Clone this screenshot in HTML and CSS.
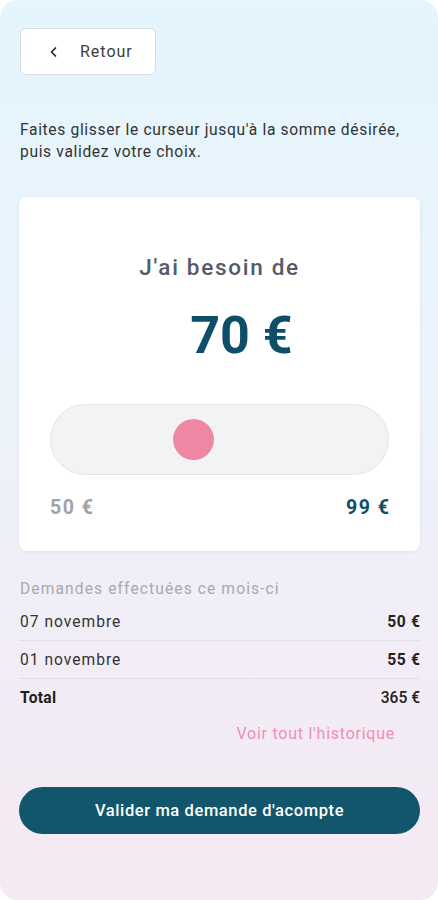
FILE: index.html
```html
<!DOCTYPE html>
<html lang="fr">
<head>
    <meta charset="UTF-8">
    <meta name="viewport" content="width=device-width, initial-scale=1.0">
    <title>Demande d'acompte</title>
    <link rel="stylesheet" href="styles.css">
</head>
<body>
    <div class="screen">
        <button class="back-btn" type="button">
            <svg class="back-icon" width="10" height="12" viewBox="0 0 10 12">
                <path d="M6.5 2 L2.5 6 L6.5 10" fill="none" stroke="#222" stroke-width="1.7" stroke-linecap="round" stroke-linejoin="round"/>
            </svg>
            <span>Retour</span>
        </button>

        <p class="intro">Faites glisser le curseur jusqu'à la somme désirée, puis validez votre choix.</p>

        <div class="card">
            <h2 class="card-title">J'ai besoin de</h2>
            <div class="amount">70 €</div>

            <div class="slider">
                <!-- position du curseur : (70 - 50) / (99 - 50) -->
                <div class="slider-thumb" style="left: 122px;"></div>
            </div>

            <div class="slider-labels">
                <span class="min">50 €</span>
                <span class="max">99 €</span>
            </div>
        </div>

        <div class="history">
            <div class="history-title">Demandes effectuées ce mois-ci</div>
            <div class="history-row">
                <span>07 novembre</span>
                <span class="value">50 €</span>
            </div>
            <div class="history-row">
                <span>01 novembre</span>
                <span class="value">55 €</span>
            </div>
            <div class="history-row total">
                <span>Total</span>
                <span class="value">365 €</span>
            </div>
            <a class="history-link" href="#">Voir tout l'historique</a>
        </div>

        <button class="submit-btn" type="button">Valider ma demande d'acompte</button>
    </div>
</body>
</html>
```

FILE: styles.css
```css
body {
    margin: 0;
    background-color: #ffffff;
    font-family: 'Roboto', 'Noto Sans', sans-serif;
    color: #2b2b2b;
}
.screen {
    box-sizing: border-box;
    height: 900px;
    border-radius: 18px;
    background: linear-gradient(180deg, #e4f5fd 0%, #ecf3fb 45%, #f2ecf6 75%, #f4eaf3 100%);
    padding: 28px 18px 0 19px;
    display: flex;
    flex-direction: column;
}
.back-btn {
    align-self: flex-start;
    margin-left: 1px;
    width: 136px;
    height: 47px;
    display: flex;
    align-items: center;
    padding: 0 0 0 28px;
    background-color: #ffffff;
    border: 1px solid #d8dce1;
    border-radius: 6px;
    font-family: inherit;
    font-size: 16px;
    letter-spacing: 1px;
    color: #3d3d3d;
    box-sizing: border-box;
}
.back-icon {
    margin-right: 21px;
}
.intro {
    margin: 44px 0 0 1px;
    font-size: 15.6px;
    line-height: 22px;
    letter-spacing: 0.65px;
    color: #333333;
}
.card {
    margin-top: 34px;
    background-color: #ffffff;
    border-radius: 8px;
    box-shadow: 0 1px 4px rgba(0, 0, 0, 0.06);
    padding: 56px 31px 31px 31px;
}
.card-title {
    margin: 0;
    text-align: center;
    font-size: 22.5px;
    line-height: 28px;
    font-weight: 500;
    letter-spacing: 1.7px;
    color: #545a69;
}
.amount {
    margin-top: 25px;
    padding-left: 44px;
    text-align: center;
    font-size: 52px;
    line-height: 60px;
    font-weight: 700;
    color: #0f4e69;
}
.slider {
    position: relative;
    margin-top: 38px;
    height: 71px;
    box-sizing: border-box;
    background-color: #f2f3f5;
    border: 1px solid #e2e4e7;
    border-radius: 36px;
}
.slider-thumb {
    position: absolute;
    top: 14px;
    width: 41px;
    height: 41px;
    border-radius: 50%;
    background-color: #ee87a4;
}
.slider-labels {
    margin-top: 21px;
    display: flex;
    justify-content: space-between;
    font-size: 19.5px;
    line-height: 24px;
    font-weight: 700;
    letter-spacing: 1.5px;
}
.slider-labels .min {
    color: #9ea2a9;
}
.slider-labels .max {
    color: #0f4e69;
    margin-right: -1.5px;
}
.history {
    margin-top: 27px;
    display: flex;
    flex-direction: column;
}
.history-title {
    font-size: 15.6px;
    line-height: 22px;
    letter-spacing: 1.1px;
    color: #a6aab1;
    margin-left: 1px;
    margin-bottom: 3px;
}
.history-row {
    display: flex;
    justify-content: space-between;
    align-items: center;
    height: 37px;
    border-bottom: 1px solid #dfe0e5;
    font-size: 15.6px;
    letter-spacing: 1px;
    color: #333333;
    padding-left: 1px;
}
.history-row .value {
    font-weight: 700;
    color: #222222;
    letter-spacing: 0.7px;
    margin-right: -0.7px;
}
.history-row.total {
    border-bottom: none;
    font-weight: 700;
    letter-spacing: 0.3px;
    color: #1e1e1e;
}
.history-row.total .value {
    font-weight: 500;
    letter-spacing: 0;
    margin-right: 0;
}
.history-link {
    align-self: flex-end;
    margin-right: 25px;
    margin-top: 7px;
    font-size: 16px;
    line-height: 22px;
    letter-spacing: 0.75px;
    color: #ef8fb0;
    text-decoration: none;
}
.submit-btn {
    margin-top: 42px;
    height: 47px;
    border: none;
    border-radius: 24px;
    background-color: #12566e;
    color: #ffffff;
    font-family: inherit;
    font-size: 16.5px;
    font-weight: 500;
    letter-spacing: 0.6px;
}
```
